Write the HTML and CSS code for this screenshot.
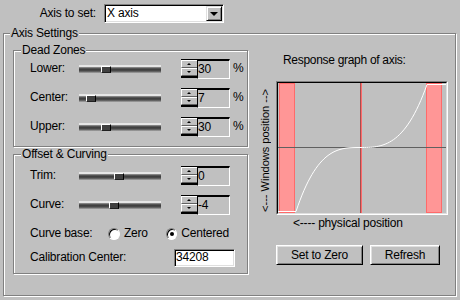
FILE: index.html
```html
<!DOCTYPE html>
<html lang="en">
<head>
	<meta charset="UTF-8">
	<title>Axis Settings</title>
	<link rel="stylesheet" href="styles.css">
</head>
<body>
	<div class="top-row">
		<span class="top-label">Axis to set:</span>
		<div class="combo">
			<span class="combo-text">X axis</span>
			<span class="combo-btn"><span class="arrow-down"></span></span>
		</div>
	</div>
	<div class="group outer">
		<span class="group-title">Axis Settings</span>
		<div class="left-col">
			<div class="group dead">
				<span class="group-title">Dead Zones</span>
				<div class="row">
					<span class="label">Lower:</span>
					<div class="slider"><span class="thumb" style="left: 22px"></span></div>
					<div class="spin"><span class="spin-up"></span><span class="spin-down"></span></div>
					<div class="num">30</div>
					<span class="unit">%</span>
				</div>
				<div class="row">
					<span class="label">Center:</span>
					<div class="slider"><span class="thumb" style="left: 7px"></span></div>
					<div class="spin"><span class="spin-up"></span><span class="spin-down"></span></div>
					<div class="num">7</div>
					<span class="unit">%</span>
				</div>
				<div class="row">
					<span class="label">Upper:</span>
					<div class="slider"><span class="thumb" style="left: 22px"></span></div>
					<div class="spin"><span class="spin-up"></span><span class="spin-down"></span></div>
					<div class="num">30</div>
					<span class="unit">%</span>
				</div>
			</div>
			<div class="group curving">
				<span class="group-title">Offset &amp; Curving</span>
				<div class="row">
					<span class="label">Trim:</span>
					<div class="slider"><span class="thumb" style="left: 35px"></span></div>
					<div class="spin"><span class="spin-up"></span><span class="spin-down"></span></div>
					<div class="num">0</div>
				</div>
				<div class="row">
					<span class="label">Curve:</span>
					<div class="slider"><span class="thumb" style="left: 30px"></span></div>
					<div class="spin"><span class="spin-up"></span><span class="spin-down"></span></div>
					<div class="num">-4</div>
				</div>
				<div class="row">
					<span class="label label-wide">Curve base:</span>
					<span class="radio"></span><span class="radio-text">Zero</span>
					<span class="radio checked"></span><span class="radio-text">Centered</span>
				</div>
				<div class="row row-cal">
					<span class="label label-cal">Calibration Center:</span>
					<div class="edit">34208</div>
				</div>
			</div>
		</div>
		<div class="right-col">
			<div class="graph-title">Response graph of axis:</div>
			<div class="graph-row">
				<span class="vlabel">&lt;--- Windows position --&gt;</span>
				<div class="graph">
					<div class="plot">
						<svg width="168" height="130" viewBox="0 0 168 130">
							<rect x="1.5" y="0.5" width="15" height="129" fill="#ff9696" stroke="#ff6a6a" shape-rendering="crispEdges"/>
							<rect x="148.5" y="0.5" width="15" height="129" fill="#ff9696" stroke="#ff6a6a" shape-rendering="crispEdges"/>
							<line x1="0" y1="64.5" x2="168" y2="64.5" stroke="#606060" shape-rendering="crispEdges"/>
							<line x1="82.5" y1="0" x2="82.5" y2="130" stroke="#a05050" shape-rendering="crispEdges"/>
							<line x1="83.5" y1="0" x2="83.5" y2="130" stroke="#ff6a6a" shape-rendering="crispEdges"/>
							<path d="M0,128.5 L18,128.5 C39.3,64.5 60.7,64.5 82,64.5 C104.3,64.5 126.7,64.5 149,1.5 L168,1.5" fill="none" stroke="#fff" stroke-width="1"/>
						</svg>
					</div>
				</div>
			</div>
			<div class="xlabel">&lt;---- physical position</div>
			<div class="buttons">
				<button class="btn btn-zero">Set to Zero</button>
				<button class="btn btn-refresh">Refresh</button>
			</div>
		</div>
	</div>
</body>
</html>
```
FILE: styles.css
```css
/* reset */
* {
	margin: 0;
	padding: 0;
}
body {
	width: 460px;
	height: 300px;
	overflow: hidden;
	background: #c0c0c0;
	color: #000;
	font-family: "Liberation Sans", Arial, sans-serif;
	font-size: 12px;
	letter-spacing: -0.2px;
	line-height: 13px;
}

/* top combo */
.top-row {
	display: flex;
	align-items: center;
	padding-top: 4px;
	height: 19px;
}
.top-label {
	width: 96px;
	margin-right: 8px;
	text-align: right;
}
.combo {
	display: flex;
	align-items: center;
	justify-content: space-between;
	width: 120px;
	height: 19px;
	box-sizing: border-box;
	background: #fff;
	border: 1px solid;
	border-color: #808080 #fff #fff #808080;
	box-shadow: inset 1px 1px 0 #000, inset -1px -1px 0 #dfdfdf;
	padding: 1px 1px 1px 2px;
}
.combo-btn {
	display: flex;
	align-items: center;
	justify-content: center;
	width: 16px;
	height: 15px;
	box-sizing: border-box;
	background: #c0c0c0;
	border: 1px solid;
	border-color: #dfdfdf #000 #000 #dfdfdf;
	box-shadow: inset 1px 1px 0 #fff, inset -1px -1px 0 #808080;
}
.arrow-down {
	width: 0;
	height: 0;
	border-left: 4px solid transparent;
	border-right: 4px solid transparent;
	border-top: 4px solid #000;
}

/* etched group boxes */
.group {
	position: relative;
	box-sizing: border-box;
	border: 1px solid #808080;
	box-shadow: 1px 1px 0 #fff, inset 1px 1px 0 #fff;
}
.group-title {
	position: absolute;
	top: -7px;
	left: 7px;
	padding: 0 1px;
	background: #c0c0c0;
}
.outer {
	display: flex;
	width: 453px;
	height: 263px;
	margin: 10px 0 0 3px;
	padding: 16px 0 0 9px;
}
.outer > .group-title {
	left: 6px;
}
.left-col {
	display: flex;
	flex-direction: column;
	gap: 7px;
	width: 235px;
}
.dead {
	height: 97px;
	padding: 3px 0 0 16px;
}
.curving {
	height: 120px;
	padding: 6px 0 0 16px;
}
.row {
	display: flex;
	align-items: center;
	height: 29px;
}
.row-cal {
	height: 19px;
}
.label {
	width: 49px;
}
.label-wide {
	width: 83px;
}
.label-cal {
	width: 144px;
}

/* trackbar */
.slider {
	position: relative;
	width: 82px;
	height: 8px;
	background: linear-gradient(#e6e6e6 0, #e6e6e6 2px, #9c9c9c 2px, #3c3c3c 4px, #4c4c4c 6px, #aaaaaa 8px);
}
.thumb {
	position: absolute;
	top: 1px;
	width: 10px;
	height: 7px;
	box-sizing: border-box;
	background: #404040;
	border-top: 1px solid #fff;
	border-left: 1px solid #fff;
	border-right: 1px solid #000;
	border-bottom: 1px solid #202020;
}

/* up-down control */
.spin {
	display: flex;
	flex-direction: column;
	width: 16px;
	height: 19px;
	margin-left: 20px;
	box-sizing: border-box;
	border-top: 1px solid #000;
	border-bottom: 2px solid #000;
}
.spin-up,
.spin-down {
	position: relative;
	flex: 1;
	box-sizing: border-box;
	border-top: 1px solid #fff;
	border-left: 1px solid #fff;
	border-bottom: 1px solid #606060;
}
.spin-up::after,
.spin-down::after {
	content: "";
	position: absolute;
	left: 5px;
	top: 2px;
	border-left: 2px solid transparent;
	border-right: 2px solid transparent;
}
.spin-up::after {
	border-bottom: 2px solid #000;
}
.spin-down::after {
	border-top: 2px solid #000;
}
.num {
	width: 33px;
	height: 20px;
	box-sizing: border-box;
	border-top: 2px solid #000;
	border-left: 1px solid #000;
	border-right: 1px solid #fff;
	border-bottom: 1px solid #fff;
	line-height: 17px;
}
.unit {
	margin-left: 3px;
}

/* radio buttons */
.radio {
	position: relative;
	width: 12px;
	height: 12px;
	box-sizing: border-box;
	border-radius: 50%;
	background: #fff;
	border: 1px solid;
	border-color: #808080 #fff #fff #808080;
	box-shadow: inset 1px 1px 0 #000;
}
.checked::after {
	content: "";
	position: absolute;
	left: 3px;
	top: 3px;
	width: 4px;
	height: 4px;
	border-radius: 50%;
	background: #000;
}
.radio-text {
	margin: 0 18px 0 4px;
}

.edit {
	width: 61px;
	height: 18px;
	box-sizing: border-box;
	padding-left: 1px;
	background: #fff;
	border: 1px solid;
	border-color: #808080 #fff #fff #808080;
	box-shadow: inset 1px 1px 0 #000, inset -1px -1px 0 #dfdfdf;
	line-height: 15px;
}

/* response graph */
.right-col {
	margin-left: 11px;
	padding-top: 4px;
	width: 186px;
}
.graph-title {
	padding-left: 24px;
	letter-spacing: -0.3px;
}
.graph-row {
	display: flex;
	align-items: center;
	gap: 4px;
	margin-top: 14px;
}
.vlabel {
	width: 13px;
	margin-top: 4px;
	font-size: 11px;
	letter-spacing: 0;
	writing-mode: vertical-rl;
	transform: rotate(180deg);
	white-space: nowrap;
}
.graph {
	border: 1px solid;
	border-color: #808080 #fff #fff #808080;
}
.plot {
	border: 1px solid;
	border-color: #000 #dfdfdf #dfdfdf #000;
}
.plot svg {
	display: block;
}
.xlabel {
	margin-top: 2px;
	padding-left: 34px;
}
.buttons {
	display: flex;
	gap: 7px;
	margin-top: 15px;
	padding-left: 17px;
}
.btn {
	height: 20px;
	box-sizing: border-box;
	background: #c0c0c0;
	border: 1px solid;
	border-color: #fff #000 #000 #fff;
	box-shadow: inset 1px 1px 0 #dfdfdf, inset -1px -1px 0 #808080;
	font-family: inherit;
	font-size: 12px;
	letter-spacing: -0.2px;
	color: #000;
}
.btn-zero {
	width: 87px;
}
.btn-refresh {
	width: 70px;
}
```
